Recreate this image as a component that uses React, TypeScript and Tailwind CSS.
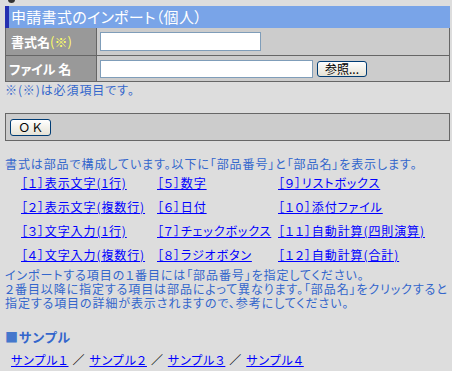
import React from 'react';

const parts = [
    ['［１］表示文字(1行)', '［５］数字', '［９］リストボックス'],
    ['［２］表示文字(複数行)', '［６］日付', '［１０］添付ファイル'],
    ['［３］文字入力(1行)', '［７］チェックボックス', '［１１］自動計算(四則演算)'],
    ['［４］文字入力(複数行)', '［８］ラジオボタン', '［１２］自動計算(合計)'],
];

const samples = ['サンプル１', 'サンプル２', 'サンプル３', 'サンプル４'];

const btn =
    'h-[16px] rounded-[3px] border border-[#003c74] bg-gradient-to-b from-white to-[#e6e3d6] text-black text-[12px] leading-[14px] tracking-normal';

export default function App() {
    return (
        <div className="relative w-[452px] h-[371px] overflow-hidden bg-[#dddddd] pl-[5px] pr-[2px] font-['Noto_Sans_CJK_JP',sans-serif] [font-feature-settings:'palt'] text-[12px] tracking-[0.9px] text-[#3366cc]">
            <div className="absolute left-[8px] -top-[4px] w-[7px] h-[7px] rounded-full bg-[#333]" />

            {/* タイトル */}
            <div className="mt-[6px] h-[22px] bg-[#79a4e8] border-l-4 border-[#2530b0] pl-[2px] text-white text-[15px] leading-[22px] tracking-[0.3px]">
                申請書式のインポート（個人）
            </div>

            {/* 入力テーブル */}
            <div className="border-x border-b border-[#666] bg-[#cccccc] tracking-normal">
                <div className="flex h-[28px] border-b border-[#666]">
                    <div className="w-[91px] shrink-0 bg-[#999999] border-r border-[#666] pl-[5px] flex items-center text-white font-bold text-[13px]">
                        書式名<span className="text-[#ffff66] font-normal">(※)</span>
                    </div>
                    <div className="flex items-center pl-[3px]">
                        <input className="w-[161px] h-[19px] bg-white border border-[#7f9db9]" />
                    </div>
                </div>
                <div className="flex h-[25px]">
                    <div className="w-[91px] shrink-0 bg-[#999999] border-r border-[#666] pl-[3px] flex items-center text-white font-bold text-[13px]">
                        ファイル 名
                    </div>
                    <div className="flex items-center pl-[3px] gap-[4px]">
                        <input className="w-[213px] h-[18px] bg-white border border-[#7f9db9]" />
                        <button className={`${btn} w-[50px]`}>参照...</button>
                    </div>
                </div>
            </div>
            <div className="leading-[14px] mt-[1px]">※(※)は必須項目です。</div>

            {/* OKボタン */}
            <div className="mt-[16px] h-[28px] border border-[#666] bg-[#cccccc] flex items-center pl-[4px]">
                <button className={`${btn} w-[41px] h-[17px]`}>Ｏ Ｋ</button>
            </div>

            <div className="mt-[16px] leading-[14px]">
                書式は部品で構成しています。以下に「部品番号」と「部品名」を表示します。
            </div>

            <div className="mt-[5px] ml-[16px] grid grid-cols-[136px_121px_1fr] gap-y-[10px]">
                {parts.flat().map(p => (
                    <a key={p} href="#" className="text-[#0000ff] underline leading-[14px] whitespace-nowrap">
                        {p}
                    </a>
                ))}
            </div>

            <div className="mt-[6px] leading-[14px] whitespace-nowrap">
                インポートする項目の１番目には「部品番号」を指定してください。<br />
                ２番目以降に指定する項目は部品によって異なります。「部品名」をクリックすると<br />
                指定する項目の詳細が表示されますので、参考にしてください。
            </div>

            <div className="mt-[20px] font-bold text-[13px] leading-[14px]">
                <span className="text-[#4477cc]">■</span>サンプル
            </div>

            <div className="mt-[9px] ml-[6px] flex items-center leading-[14px]">
                {samples.map((s, i) => (
                    <React.Fragment key={s}>
                        {i > 0 && <span className="text-black px-[4px]">／</span>}
                        <a href="#" className="text-[#0000ff] underline">{s}</a>
                    </React.Fragment>
                ))}
            </div>
        </div>
    );
}
